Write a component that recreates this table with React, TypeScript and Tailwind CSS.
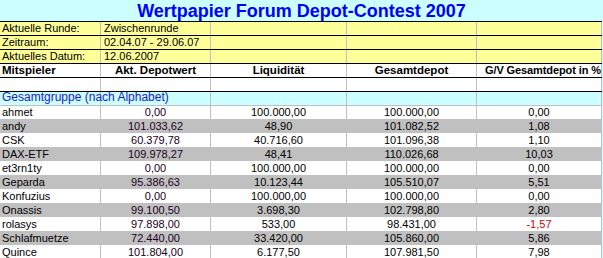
const cols = 'grid grid-cols-[101px_110px_136px_130px_125px]';
const cell = 'border-r border-[#c0c0c0] overflow-visible whitespace-nowrap';

const info = [
  ['Aktuelle Runde:', 'Zwischenrunde'],
  ['Zeitraum:', '02.04.07 - 29.06.07'],
  ['Aktuelles Datum:', '12.06.2007'],
];

const rows: [string, string, string, string, string][] = [
  ['ahmet', '0,00', '100.000,00', '100.000,00', '0,00'],
  ['andy', '101.033,62', '48,90', '101.082,52', '1,08'],
  ['CSK', '60.379,78', '40.716,60', '101.096,38', '1,10'],
  ['DAX-ETF', '109.978,27', '48,41', '110.026,68', '10,03'],
  ['et3rn1ty', '0,00', '100.000,00', '100.000,00', '0,00'],
  ['Geparda', '95.386,63', '10.123,44', '105.510,07', '5,51'],
  ['Konfuzius', '0,00', '100.000,00', '100.000,00', '0,00'],
  ['Onassis', '99.100,50', '3.698,30', '102.798,80', '2,80'],
  ['rolasys', '97.898,00', '533,00', '98.431,00', '-1,57'],
  ['Schlafmuetze', '72.440,00', '33.420,00', '105.860,00', '5,86'],
  ['Quince', '101.804,00', '6.177,50', '107.981,50', '7,98'],
];

export default function App() {
  return (
    <div className="min-h-screen bg-[#ccffff] font-['Liberation_Sans',Arial,sans-serif] text-black">
      <div className="h-[21px] text-center text-[18px] font-bold leading-[23px] text-[#0000ff]">
        Wertpapier Forum Depot-Contest 2007
      </div>

      <div className="w-[602px]">
        {info.map(([label, value]) => (
          <div key={label} className={`${cols} h-[14px] border-t border-black bg-[#ffff99] text-[11px] leading-[13px]`}>
            <div className={`${cell} pl-[2px]`}>{label}</div>
            <div className={`${cell} pl-[3px]`}>{value}</div>
            <div className={cell} />
            <div className={cell} />
            <div className={cell} />
          </div>
        ))}

        <div className={`${cols} h-[14px] border-t border-black bg-white text-[11.5px] font-bold leading-[12px]`}>
          <div className={`${cell} pl-[2px]`}>Mitspieler</div>
          <div className={`${cell} text-center`}>Akt. Depotwert</div>
          <div className={`${cell} text-center`}>Liquidität</div>
          <div className={`${cell} text-center`}>Gesamtdepot</div>
          <div className={`${cell} pl-[8px] text-[11px] tracking-[-0.1px]`}>G/V Gesamtdepot in %</div>
        </div>

        <div className={`${cols} h-[14px] border-t border-black bg-white`}>
          <div className={cell} />
          <div className={cell} />
          <div className={cell} />
          <div className={cell} />
          <div className={cell} />
        </div>

        <div className={`${cols} h-[14px] border-t border-black bg-[#ccffff] text-[12px] leading-[11px] text-[#1a1acc]`}>
          <div className={`${cell} pl-[2px]`}>Gesamtgruppe (nach Alphabet)</div>
          <div className={cell} />
          <div className={cell} />
          <div className={cell} />
          <div className={cell} />
        </div>

        {rows.map((r, i) => (
          <div
            key={r[0]}
            className={`${cols} text-[11px] ${i === 0 ? 'h-[14px] border-t border-[#c0c0c0] leading-[13px]' : 'h-[14px] leading-[14px]'} ${
              i % 2 === 1 ? 'bg-[#c0c0c0]' : 'bg-white'
            }`}
          >
            <div className={`${cell} pl-[2px]`}>{r[0]}</div>
            <div className={`${cell} text-center text-[#220022]`}>{r[1]}</div>
            <div className={`${cell} text-center`}>{r[2]}</div>
            <div className={`${cell} text-center`}>{r[3]}</div>
            <div className={`${cell} text-center ${r[4].startsWith('-') ? 'text-[#cc0000]' : ''}`}>{r[4]}</div>
          </div>
        ))}
      </div>
    </div>
  );
}
